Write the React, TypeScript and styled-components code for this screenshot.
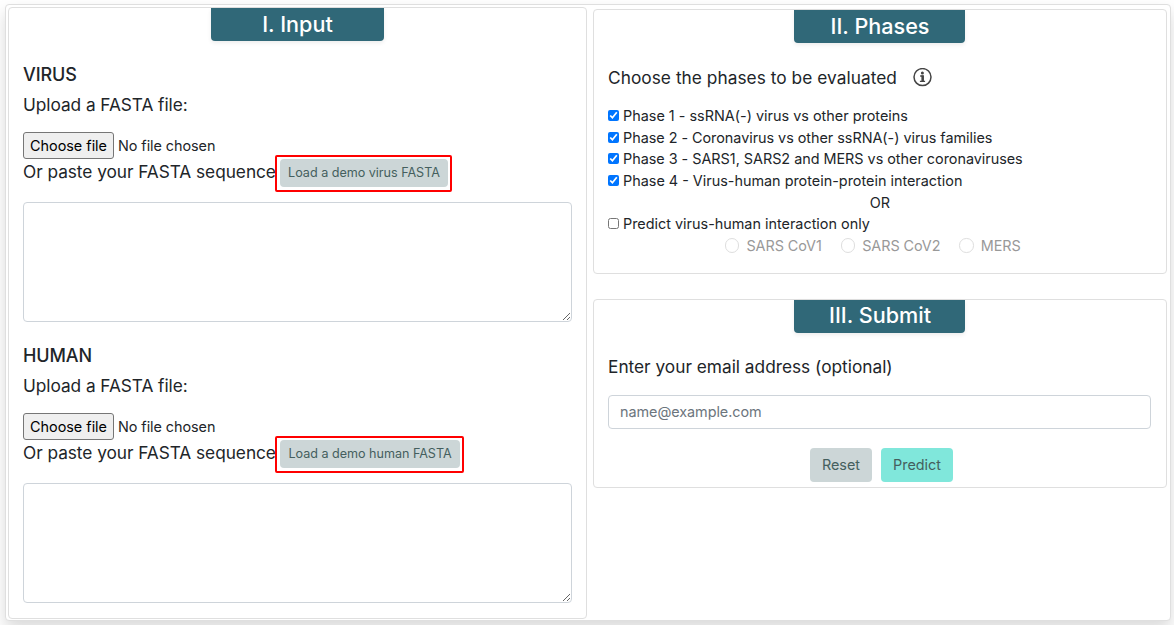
import React from "react";
import styled, { createGlobalStyle } from "styled-components";

const GlobalStyle = createGlobalStyle`
  *, *::before, *::after { box-sizing: border-box; }
  body {
    margin: 0;
    background: #fff;
    color: #212529;
    font-family: Inter, "Liberation Sans", sans-serif;
    font-size: 14.4px;
    line-height: 21.6px;
    overflow: hidden;
  }
  button, input, textarea { font-family: inherit; margin: 0; }
`;

const Page = styled.div`
  height: 625px;
  padding: 4px 3px 0 5px;
  overflow: hidden;
`;

const Shell = styled.main`
  display: flex;
  align-items: flex-start;
  gap: 6px;
  height: 617px;
  padding: 2px 3px 0 2px;
  border: 1px solid #dfdfdf;
  border-radius: 4px;
  background: #fff;
  box-shadow: 0 8px 16px rgba(0, 0, 0, 0.15);
`;

const Column = styled.div`
  display: flex;
  flex-direction: column;
  gap: 25px;
  flex: 1;
  padding-top: 2px;
`;

const Panel = styled.section<{ $width?: number; $height: number }>`
  width: ${(p) => (p.$width ? `${p.$width}px` : "100%")};
  height: ${(p) => p.$height}px;
  padding: 0 14px;
  border: 1px solid #dfdfdf;
  border-radius: 4px;
  background: #fff;
`;

const Banner = styled.h4<{ $width: number; $line?: number }>`
  width: ${(p) => p.$width}px;
  height: 33px;
  margin: 0 auto;
  border-radius: 0 0 4px 4px;
  background: #306878;
  box-shadow: 0 2px 4px rgba(0, 0, 0, 0.075);
  color: #fff;
  font-size: 21.6px;
  font-weight: 500;
  line-height: ${(p) => p.$line ?? 33}px;
  text-align: center;

  ${Column} & { margin-left: 186px; padding-left: 1px; }
`;

const Group = styled.div<{ $top: number }>`
  padding-top: ${(p) => p.$top}px;
`;

const GroupTitle = styled.h5`
  margin: 0;
  font-size: 18px;
  font-weight: 500;
  letter-spacing: -0.1px;
  line-height: 23px;
`;

const Lead = styled.p<{ $top?: number; $track?: number }>`
  display: flex;
  align-items: center;
  margin: ${(p) => p.$top ?? 0}px 0 0;
  font-size: 17.28px;
  letter-spacing: ${(p) => p.$track ?? 0}px;
  line-height: 26px;
  white-space: nowrap;
`;

const FileRow = styled.div`
  display: flex;
  align-items: center;
  gap: 4px;
  height: 27px;
  margin-top: 14px;
  letter-spacing: -0.05px;
`;

const FileButton = styled.button`
  width: 91px;
  height: 27px;
  padding: 0;
  border: 1px solid #767676;
  border-radius: 3px;
  background: #efefef;
  color: #000;
  font-size: 14.4px;
  line-height: 22px;
`;

const PasteRow = styled.div`
  display: flex;
  height: 37px;
  margin-top: -4px;
`;

const PasteText = styled.span`
  width: 252px;
  margin-bottom: 4px;
`;

const Highlight = styled.div`
  display: flex;
  flex: none;
  height: 37px;
  padding: 2px 2px 3px 3px;
  border: 2px solid #f00;
  border-radius: 2px;
`;

const Button = styled.button<{ $tone?: "aqua"; $small?: boolean; $width: number }>`
  width: ${(p) => p.$width}px;
  height: ${(p) => (p.$small ? 28 : 34)}px;
  padding: 0;
  border: 0;
  border-radius: 4px;
  background: ${(p) => (p.$tone === "aqua" ? "#80e7db" : "#ccd6d7")};
  color: #455f5e;
  font-size: ${(p) => (p.$small ? 12.6 : 14.4)}px;
  letter-spacing: -0.02px;
  line-height: 20px;
  white-space: nowrap;
`;

const Sequence = styled.textarea`
  display: block;
  width: 549px;
  height: 120px;
  margin-top: 10px;
  padding: 6px 12px;
  border: 1px solid #ced4da;
  border-radius: 4px;
  background: #fff;
  resize: vertical;
  outline: 0;
`;

const InfoIcon = styled.svg`
  width: 19px;
  height: 19px;
  margin: -2px 0 0 16.5px;
`;

const Checks = styled.div`
  margin-top: 14px;
`;

const CheckRow = styled.label<{ $track?: number }>`
  display: flex;
  align-items: center;
  gap: 4px;
  height: 21.6px;
  letter-spacing: ${(p) => p.$track ?? 0}px;
`;

const Check = styled.input`
  width: 11px;
  height: 11px;
`;

const Or = styled.div`
  height: 21.6px;
  line-height: 24px;
  text-align: center;
`;

const Radios = styled.div`
  display: flex;
  gap: 19px;
  padding-left: 117px;
  color: #999;
  letter-spacing: -0.06px;
`;

const RadioLabel = styled.label`
  display: flex;
  align-items: center;
  gap: 7px;
`;

const Dot = styled.span`
  width: 14.4px;
  height: 14.4px;
  border: 1px solid #dedede;
  border-radius: 50%;
`;

const Email = styled.input`
  display: block;
  width: 543px;
  height: 34px;
  margin-top: 15px;
  padding: 0 11px 2px;
  border: 1px solid #ced4da;
  border-radius: 4px;
  font-size: 14.4px;
  letter-spacing: -0.05px;
  outline: 0;
  &::placeholder { color: #6c757d; opacity: 1; }
`;

const Actions = styled.div`
  display: flex;
  justify-content: center;
  gap: 9px;
  margin-top: 19px;
  padding-left: 3px;
`;

const phases = [
  { text: "Phase 1 - ssRNA(-) virus vs other proteins", track: 0.01 },
  { text: "Phase 2 - Coronavirus vs other ssRNA(-) virus families", track: -0.03 },
  { text: "Phase 3 - SARS1, SARS2 and MERS vs other coronaviruses", track: -0.02 },
  { text: "Phase 4 - Virus-human protein-protein interaction", track: 0 },
];

interface FastaGroupProps {
  title: string;
  demo: string;
  demoWidth: number;
}

function FastaGroup({ title, demo, demoWidth }: FastaGroupProps) {
  return (
    <Group $top={22}>
      <GroupTitle>{title}</GroupTitle>
      <Lead $top={6} $track={-0.05}>Upload a FASTA file:</Lead>
      <FileRow>
        <FileButton type="button">Choose file</FileButton>
        <span>No file chosen</span>
      </FileRow>
      <PasteRow>
        <Lead as="div" $track={-0.04}>
          <PasteText>Or paste your FASTA sequence</PasteText>
        </Lead>
        <Highlight>
          <Button type="button" $small $width={demoWidth}>{demo}</Button>
        </Highlight>
      </PasteRow>
      <Sequence aria-label={`${title} sequence`} />
    </Group>
  );
}

export default function App() {
  return (
    <>
      <GlobalStyle />
      <Page>
        <Shell>
          <Panel $width={579} $height={612}>
            <Banner $width={173}>I. Input</Banner>
            <FastaGroup title="VIRUS" demo="Load a demo virus FASTA" demoWidth={168} />
            <FastaGroup title="HUMAN" demo="Load a demo human FASTA" demoWidth={180} />
          </Panel>
          <Column>
            <Panel $height={265}>
              <Banner $width={171}>II. Phases</Banner>
              <Lead $top={22} $track={0.045}>
                Choose the phases to be evaluated
                <InfoIcon viewBox="0 0 19 19" fill="none" stroke="#444" aria-hidden="true">
                  <circle cx="9.5" cy="9.1" r="8.5" strokeWidth="1.5" />
                  <circle cx="9.4" cy="4.9" r="1.5" fill="#444" stroke="none" />
                  <path d="M7.2 8h2.9v5.4M6.9 13.4h5.2" strokeWidth="1.4" />
                  <path d="M9.6 7.6v6" strokeWidth="2.4" />
                </InfoIcon>
              </Lead>
              <Checks>
                {phases.map(({ text, track }) => (
                  <CheckRow key={text} $track={track}>
                    <Check type="checkbox" defaultChecked />
                    {text}
                  </CheckRow>
                ))}
                <Or>OR</Or>
                <CheckRow>
                  <Check type="checkbox" />
                  Predict virus-human interaction only
                </CheckRow>
                <Radios>
                  {["SARS CoV1", "SARS CoV2", "MERS"].map((name) => (
                    <RadioLabel key={name}>
                      <Dot />
                      {name}
                    </RadioLabel>
                  ))}
                </Radios>
              </Checks>
            </Panel>
            <Panel $height={189}>
              <Banner $width={171} $line={31}>III. Submit</Banner>
              <Lead $top={21}>Enter your email address (optional)</Lead>
              <Email type="email" placeholder="name@example.com" />
              <Actions>
                <Button type="button" $width={62}>Reset</Button>
                <Button type="button" $tone="aqua" $width={72}>Predict</Button>
              </Actions>
            </Panel>
          </Column>
        </Shell>
      </Page>
    </>
  );
}
